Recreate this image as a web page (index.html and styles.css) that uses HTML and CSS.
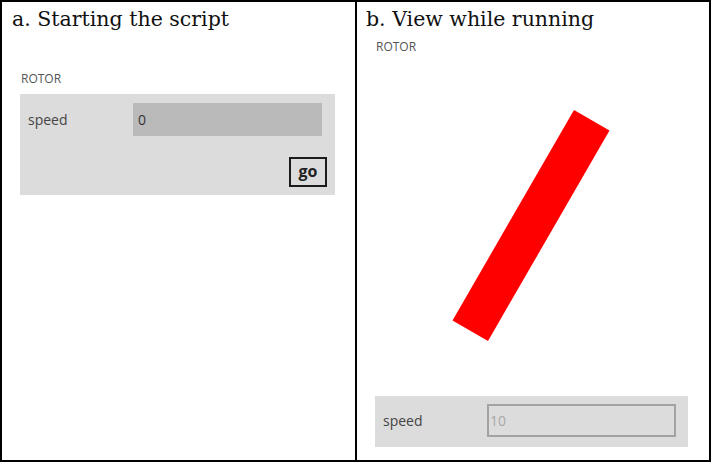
FILE: index.html
```html
<!DOCTYPE html>
<html>
<head>
<meta charset="utf-8">
<link rel="stylesheet" href="styles.css">
</head>
<body>
<div class="frame">
  <div class="cell cell-left">
    <div class="title">a. Starting the script</div>
    <div class="content">
      <div class="label label-left">ROTOR</div>
      <div class="panel panel-left">
        <div class="row">
          <span class="field-name">speed</span>
          <div class="input input-active">0</div>
        </div>
        <div class="actions">
          <button class="go">go</button>
        </div>
      </div>
    </div>
  </div>
  <div class="cell cell-right">
    <div class="title">b. View while running</div>
    <div class="content content-right">
      <div class="label label-right">ROTOR</div>
      <svg class="canvas" width="334" height="330" viewBox="0 0 334 330">
        <rect x="135.5" y="49" width="41" height="243" fill="#ff0000" transform="rotate(30 156 170.5)"/>
      </svg>
      <div class="panel panel-right">
        <div class="row">
          <span class="field-name">speed</span>
          <div class="input input-disabled">10</div>
        </div>
      </div>
    </div>
  </div>
</div>
</body>
</html>
```
FILE: styles.css
```css
* { box-sizing: border-box; }
html, body { margin: 0; padding: 0; background: #fff; }
body { width: 712px; height: 463px; overflow: hidden; }

.frame {
  display: grid;
  grid-template-columns: 355px 352px;
  width: 711px;
  height: 462px;
  border: 2px solid #000;
}

.cell {
  display: flex;
  flex-direction: column;
  min-height: 0;
}
.cell-left { border-right: 2px solid #000; }

.title {
  font-family: "DejaVu Serif", serif;
  font-size: 20.5px;
  line-height: 30px;
  padding: 2px 0 0 10px;
  color: #111;
}
.cell-right .title { padding-left: 9px; }

.content {
  display: flex;
  flex-direction: column;
  padding: 0 0 0 18px;
  flex: 1;
}

.label {
  font-family: "Open Sans", sans-serif;
  font-size: 12px;
  line-height: 16px;
  color: #555;
  padding-left: 1px;
}
.label-left { margin-top: 37px; }
.label-right { margin-top: 5px; }

.panel {
  background: #dcdcdc;
  font-family: "Open Sans", sans-serif;
}
.panel-left {
  width: 315px;
  margin-top: 7px;
  padding: 9px 13px 8px 8px;
}
.panel-right {
  width: 313px;
  margin-top: auto;
  margin-bottom: 13px;
  padding: 8px 12px 10px 8px;
}

.row {
  display: flex;
  align-items: center;
}
.field-name {
  width: 105px;
  font-size: 14px;
  color: #444;
}
.panel-right .field-name { width: 104px; }

.input {
  width: 189px;
  height: 33px;
  font-size: 14px;
  display: flex;
  align-items: center;
}
.input-active {
  background: #bababa;
  color: #333;
  padding-left: 5px;
}
.input-disabled {
  border: 2px solid #a2a2a2;
  color: #a8a8a8;
  padding-left: 1px;
}

.actions {
  display: flex;
  justify-content: flex-end;
  margin-top: 21px;
  margin-right: -5px;
}
.go {
  width: 38px;
  height: 30px;
  border: 2px solid #1a1a1a;
  background: transparent;
  font-family: "Open Sans", sans-serif;
  font-weight: 700;
  font-size: 16px;
  color: #222;
  padding: 0 0 2px;
  line-height: 1;
}

.canvas { display: block; }
```
